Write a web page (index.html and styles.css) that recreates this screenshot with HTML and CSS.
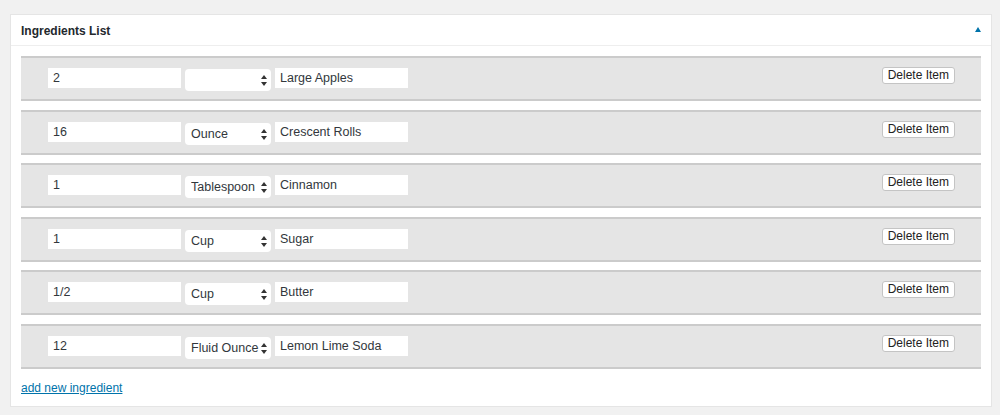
FILE: index.html
```html
<!DOCTYPE html>
<html>
<head>
<meta charset="utf-8">
<link rel="stylesheet" href="styles.css">
</head>
<body>
<div class="panel">
  <div class="panel-header">
    <h2 class="panel-title">Ingredients List</h2>
    <svg class="toggle" width="6" height="5" viewBox="0 0 6 5"><polygon points="3,0 6,5 0,5" fill="#0073aa"/></svg>
  </div>
  <div class="panel-body">
    <div class="row">
      <input class="field" type="text" value="2">
      <span class="select-wrap"><select class="select"><option></option></select><svg class="arrows" width="6" height="11" viewBox="0 0 6 11"><polygon points="3,0 6,4 0,4" fill="#333"/><polygon points="0,7 6,7 3,11" fill="#333"/></svg></span>
      <input class="field" type="text" value="Large Apples">
      <button class="delete">Delete Item</button>
    </div>
    <div class="row">
      <input class="field" type="text" value="16">
      <span class="select-wrap"><select class="select"><option>Ounce</option></select><svg class="arrows" width="6" height="11" viewBox="0 0 6 11"><polygon points="3,0 6,4 0,4" fill="#333"/><polygon points="0,7 6,7 3,11" fill="#333"/></svg></span>
      <input class="field" type="text" value="Crescent Rolls">
      <button class="delete">Delete Item</button>
    </div>
    <div class="row">
      <input class="field" type="text" value="1">
      <span class="select-wrap"><select class="select"><option>Tablespoon</option></select><svg class="arrows" width="6" height="11" viewBox="0 0 6 11"><polygon points="3,0 6,4 0,4" fill="#333"/><polygon points="0,7 6,7 3,11" fill="#333"/></svg></span>
      <input class="field" type="text" value="Cinnamon">
      <button class="delete">Delete Item</button>
    </div>
    <div class="row">
      <input class="field" type="text" value="1">
      <span class="select-wrap"><select class="select"><option>Cup</option></select><svg class="arrows" width="6" height="11" viewBox="0 0 6 11"><polygon points="3,0 6,4 0,4" fill="#333"/><polygon points="0,7 6,7 3,11" fill="#333"/></svg></span>
      <input class="field" type="text" value="Sugar">
      <button class="delete">Delete Item</button>
    </div>
    <div class="row">
      <input class="field" type="text" value="1/2">
      <span class="select-wrap"><select class="select"><option>Cup</option></select><svg class="arrows" width="6" height="11" viewBox="0 0 6 11"><polygon points="3,0 6,4 0,4" fill="#333"/><polygon points="0,7 6,7 3,11" fill="#333"/></svg></span>
      <input class="field" type="text" value="Butter">
      <button class="delete">Delete Item</button>
    </div>
    <div class="row">
      <input class="field" type="text" value="12">
      <span class="select-wrap"><select class="select"><option>Fluid Ounce</option></select><svg class="arrows" width="6" height="11" viewBox="0 0 6 11"><polygon points="3,0 6,4 0,4" fill="#333"/><polygon points="0,7 6,7 3,11" fill="#333"/></svg></span>
      <input class="field" type="text" value="Lemon Lime Soda">
      <button class="delete">Delete Item</button>
    </div>
    <a class="add-link" href="#">add new ingredient</a>
  </div>
</div>
</body>
</html>
```

FILE: styles.css
```css
html, body {
  margin: 0;
  padding: 0;
}
body {
  background: #f1f1f1;
  font-family: "Liberation Sans", Arial, sans-serif;
  color: #23282d;
}
.panel {
  box-sizing: border-box;
  width: 982px;
  margin: 14px 0 0 10px;
  background: #fff;
  border: 1px solid #e5e5e5;
}
.panel-header {
  height: 30px;
  border-bottom: 1px solid #eeeeee;
  padding: 0 10px 0 10px;
  display: flex;
  align-items: center;
  justify-content: space-between;
}
.panel-title {
  margin: 0;
  font-size: 12px;
  font-weight: bold;
  color: #23282d;
  padding-top: 1px;
}
.toggle {
  display: block;
  margin-top: -2px;
}
.panel-body {
  padding: 10px 10px 10px 10px;
}
.row {
  box-sizing: border-box;
  height: 45px;
  margin-bottom: 8.6px;
  background: #e5e5e5;
  border-top: 2px solid #cbcbcb;
  border-bottom: 2px solid #cbcbcb;
  padding: 10px 26px 0 27px;
  display: flex;
  align-items: flex-start;
}
.field {
  box-sizing: border-box;
  width: 133px;
  height: 20px;
  border: none;
  background: #fff;
  padding: 0 5px;
  margin: 0;
  font-family: "Liberation Sans", Arial, sans-serif;
  font-size: 12.5px;
  color: #32373c;
  outline: none;
}
.select-wrap {
  position: relative;
  display: block;
  margin: 1px 4px 0 4px;
}
.select {
  display: block;
  box-sizing: border-box;
  width: 86px;
  height: 22px;
  -webkit-appearance: none;
  appearance: none;
  border: none;
  border-radius: 4px;
  background: #fff;
  padding: 0 0 0 6px;
  margin: 0;
  font-family: "Liberation Sans", Arial, sans-serif;
  font-size: 12.5px;
  color: #32373c;
  outline: none;
}
.arrows {
  position: absolute;
  right: 4px;
  top: 6px;
}
.delete {
  margin: -1px 0 0 auto;
  box-sizing: border-box;
  height: 17px;
  padding: 0 5px;
  background: #fff;
  border: 1px solid #c4c4c4;
  border-radius: 3px;
  font-family: "Liberation Sans", Arial, sans-serif;
  font-size: 12px;
  line-height: 15px;
  color: #222;
}
.add-link {
  display: block;
  width: max-content;
  margin-top: 12px;
  font-size: 12px;
  line-height: 15px;
  color: #0073aa;
  text-decoration: underline;
}
```
